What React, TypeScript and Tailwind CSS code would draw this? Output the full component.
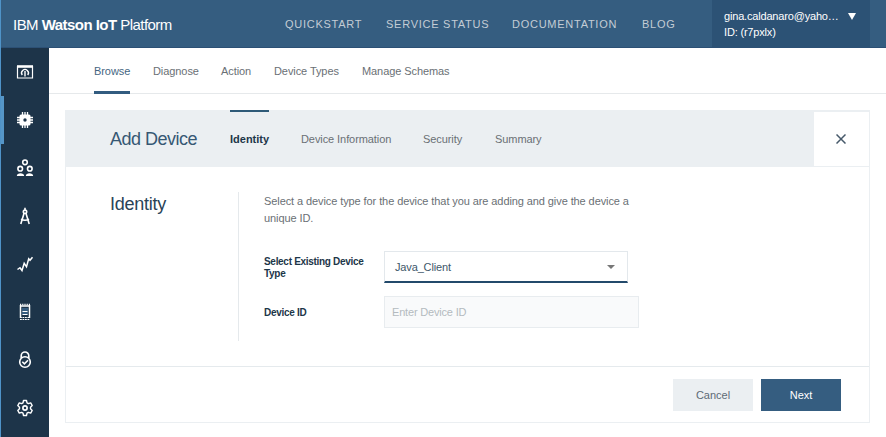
import type { ReactNode } from "react";

function Icon({ children }: { children: ReactNode }) {
  return (
    <svg width="18" height="18" viewBox="0 0 18 18" fill="none" stroke="#ffffff" strokeWidth="1.6">
      {children}
    </svg>
  );
}

const sideIcons: ReactNode[] = [
  <Icon key="dashboard">
    <path d="M1.500 3.500h15v11.500h-15z" strokeWidth="1.2" />
    <path d="M1 3.500h16" strokeWidth="2.6" />
    <path d="M6.300 12a3.400 3.400 0 1 1 5.400 0M9 8v5.500" strokeWidth="1.4" />
  </Icon>,
  <Icon key="chip">
    <path d="M6.500 1v16M9 1v16M11.500 1v16M1 6.500h16M1 9h16M1 11.500h16" strokeWidth="1.3" />
    <rect x="3.500" y="3.500" width="11" height="11" rx="1.5" fill="#fff" stroke="none" />
    <circle cx="9" cy="9" r="1.7" fill="#1d3449" stroke="none" />
  </Icon>,
  <Icon key="people">
    <circle cx="9" cy="3.300" r="2.3" />
    <circle cx="4.200" cy="9.700" r="2.3" />
    <circle cx="13.800" cy="9.700" r="2.3" />
    <path d="M.800 17c0-3.600 7.400-3.600 7.400 0zM9.800 17c0-3.600 7.400-3.600 7.400 0z" fill="#fff" stroke="none" />
  </Icon>,
  <Icon key="compass">
    <path d="M9 .8v2.400M8.200 5.800 4.800 17M9.800 5.800l3.400 11.200M5 12.300c2.500 1.200 5.500 1.200 8 0" />
    <circle cx="9" cy="4.800" r="1.7" />
  </Icon>,
  <Icon key="graph">
    <path d="M1.500 14.500 4 12.700l2 2.800 2.200-7.200 2.300 3.500 2.200-8 1.300 1.500 2.500-3" strokeWidth="1.5" />
  </Icon>,
  <Icon key="report">
    <path d="M4.500 2v13M13.500 2v13M4 3h10" strokeWidth="1.5" />
    <path d="M4 1.500h10" strokeDasharray="1.2 1" />
    <path d="M4 14.500h10M4 16.500h10" strokeWidth="1.2" strokeDasharray="1.8 .7" />
    <rect x="6" y="5" width="6" height="7" fill="#365d80" stroke="none" />
    <path d="M6.500 8.500h5M6.500 11.500h5" strokeWidth="1" />
  </Icon>,
  <Icon key="lock">
    <path d="M5.200 7V4.800a3.800 3.800 0 0 1 7.600 0V7" />
    <circle cx="9" cy="11" r="5.3" />
    <path d="m6.300 10.800 2.100 2.100 3.600-3.600" />
  </Icon>,
  <Icon key="settings">
    <path
      d="M7.500 1.500h3l.5 2.300 1.400.8 2.300-.7 1.500 2.600L14.500 8.200v1.600l1.700 1.700-1.500 2.600-2.300-.7-1.400.8-.5 2.300h-3L7 14.200l-1.400-.8-2.300.7-1.500-2.600 1.700-1.700V8.200L1.800 6.500l1.500-2.600 2.300.7L7 3.800z"
      strokeWidth="1.4"
      strokeLinejoin="round"
    />
    <circle cx="9" cy="9" r="2.1" strokeWidth="1.7" />
  </Icon>,
];

export default function App() {
  return (
    <div className="flex h-[437px] w-[886px] flex-col overflow-hidden border-l border-[#4f93c8] bg-white font-['Liberation_Sans',Arial,sans-serif] text-[11px] whitespace-nowrap text-[#6a7075]">
      <header className="flex h-12 shrink-0 border-b border-[#2c5075] bg-[#355d80] text-white">
        <div className="w-[271px] pt-[15px] pl-3 text-[15px] leading-5 tracking-[-0.54px]">
          IBM <b>Watson IoT</b> Platform
        </div>
        <nav className="flex w-[440px] pt-4 pl-[13px] text-[11px] leading-4 tracking-[0.74px] text-[#c3ccd5]">
          <a className="w-[101px]">QUICKSTART</a>
          <a className="w-[126px]">SERVICE STATUS</a>
          <a className="w-[130px]">DOCUMENTATION</a>
          <a>BLOG</a>
        </nav>
        <div className="flex w-[158px] bg-[#2c5275] pt-2 pl-3 leading-4">
          <div className="w-[124px] text-[11px] tracking-[-0.18px]">
            <div>gina.caldanaro@yaho…</div>
            <div>ID: (r7pxlx)</div>
          </div>
          <svg className="mt-[5px]" width="8" height="7" viewBox="0 0 8 7">
            <path d="M0 0h8L4 7z" fill="#fff" />
          </svg>
        </div>
      </header>
      <div className="flex min-h-0 grow">
        <aside className="flex w-12 shrink-0 flex-col bg-[#1d3449]">
          {sideIcons.map((icon, i) => (
            <div key={i} className="relative flex h-12 shrink-0 items-center justify-center pr-px">
              {i === 1 && <span className="absolute inset-y-0 -left-px w-1 bg-[#5596c8]" />}
              {icon}
            </div>
          ))}
        </aside>
        <main className="flex grow flex-col">
          <nav className="flex h-[46px] shrink-0 border-b border-[#e6e9eb] pl-[45px] leading-[46px] tracking-[-0.08px]">
            <a className="mr-[23px] h-[46px] w-[36px] border-b-3 border-[#325c80] text-[#466682]">Browse</a>
            <a className="w-[68px]">Diagnose</a>
            <a className="w-[53px]">Action</a>
            <a className="w-[88px]">Device Types</a>
            <a>Manage Schemas</a>
          </nav>
          <section className="mt-4 ml-4 flex h-[313px] w-[805px] flex-col border border-[#ebeff2]">
            <div className="flex h-[56px] shrink-0 border-b border-[#ebeff2] bg-[#ebeff2]">
              <h1 className="w-[164px] pl-[44px] text-[18px] leading-[56px] tracking-[-0.5px] text-[#365874]">Add Device</h1>
              <nav className="flex w-[584px] leading-[56px] tracking-[-0.08px]">
                <b className="-mt-px mr-8 h-[56px] w-[39px] border-t-2 border-[#2e5a78] leading-[55px] tracking-normal text-[#1d3649]">Identity</b>
                <a className="w-[122px]">Device Information</a>
                <a className="w-[72px]">Security</a>
                <a>Summary</a>
              </nav>
              <button className="mt-px flex h-[54px] w-[55px] items-center justify-center bg-white pr-px">
                <svg width="10" height="10" viewBox="0 0 10 10" stroke="#46596a" strokeWidth="1.5">
                  <path d="m.5.5 9 9M9.500.5l-9 9" />
                </svg>
              </button>
            </div>
            <div className="flex h-[199px] shrink-0 pt-[25px]">
              <h2 className="w-[172px] pl-[44px] text-[18px] leading-6 tracking-[-0.25px] text-[#2a4357]">Identity</h2>
              <div className="h-[149px] w-px bg-[#e5e9ec]" />
              <div className="pl-[25px]">
                <p className="pt-px leading-[17px] tracking-[-0.09px]">
                  Select a device type for the device that you are adding and give the device a<br />
                  unique ID.
                </p>
                <div className="mt-6 flex h-8">
                  <label className="w-[120px] pt-[5px] text-[10px] leading-3 font-bold tracking-[-0.3px] text-[#1d3649]">
                    Select Existing Device<br />Type
                  </label>
                  <div className="flex w-[244px] items-center justify-between border border-b-2 border-[#e3e8ec] border-b-[#234a6b] pt-px pr-3 pl-[10px] tracking-[-0.15px] text-[#40576a]">
                    <span>Java_Client</span>
                    <svg width="8" height="4" viewBox="0 0 8 4"><path d="M0 0h8L4 4z" fill="#777" /></svg>
                  </div>
                </div>
                <div className="mt-[13px] flex h-8">
                  <label className="w-[120px] pt-[11px] text-[10px] leading-3 font-bold tracking-[-0.3px] text-[#1d3649]">Device ID</label>
                  <div className="w-[255px] border border-[#e8ecef] bg-[#f9fafb] pl-[7px] leading-[30px] tracking-[-0.18px] text-[#b4babf]">Enter Device ID</div>
                </div>
              </div>
            </div>
            <div className="flex grow justify-end gap-2 border-t border-[#e5eaed] pt-3 pr-7">
              <button className="h-8 w-20 bg-[#ebeff2] text-[#5d6a75]">Cancel</button>
              <button className="h-8 w-20 bg-[#355d80] text-white">Next</button>
            </div>
          </section>
        </main>
      </div>
    </div>
  );
}
